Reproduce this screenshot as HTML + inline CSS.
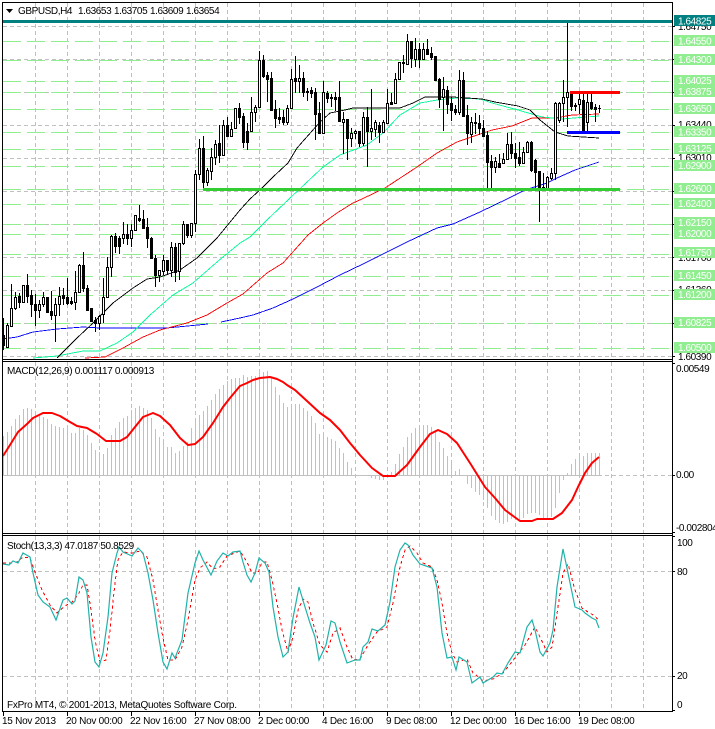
<!DOCTYPE html>
<html><head><meta charset="utf-8"><style>
html,body{margin:0;padding:0;background:#fff;width:715px;height:729px;overflow:hidden}
svg{display:block}
text{font-family:"Liberation Sans",sans-serif;font-size:10px;letter-spacing:-.42px;fill:#000}
.w text{fill:#fff}
.t text{letter-spacing:-.26px}
</style></head><body>
<svg width="715" height="729" viewBox="0 0 715 729" xmlns="http://www.w3.org/2000/svg">
<rect width="715" height="729" fill="#fff"/>
<!-- vertical grid -->
<g stroke="#c0c0c0" stroke-dasharray="4 3" fill="none" shape-rendering="crispEdges">
<path d="M35.5 3V359M67.5 3V359M99.5 3V359M131.5 3V359M163.5 3V359M195.5 3V359M227.5 3V359M259.5 3V359M291.5 3V359M323.5 3V359M355.5 3V359M387.5 3V359M419.5 3V359M451.5 3V359M483.5 3V359M515.5 3V359M547.5 3V359M579.5 3V359M611.5 3V359M643.5 3V359"/>
<path d="M35.5 362V533M67.5 362V533M99.5 362V533M131.5 362V533M163.5 362V533M195.5 362V533M227.5 362V533M259.5 362V533M291.5 362V533M323.5 362V533M355.5 362V533M387.5 362V533M419.5 362V533M451.5 362V533M483.5 362V533M515.5 362V533M547.5 362V533M579.5 362V533M611.5 362V533M643.5 362V533"/>
<path d="M35.5 536V711M67.5 536V711M99.5 536V711M131.5 536V711M163.5 536V711M195.5 536V711M227.5 536V711M259.5 536V711M291.5 536V711M323.5 536V711M355.5 536V711M387.5 536V711M419.5 536V711M451.5 536V711M483.5 536V711M515.5 536V711M547.5 536V711M579.5 536V711M611.5 536V711M643.5 536V711"/>
<path d="M3 26.5H672M3 59.5H672M3 92.5H672M3 125.5H672M3 158.5H672M3 191.5H672M3 224.5H672M3 257.5H672M3 290.5H672M3 323.5H672M3 356.5H672"/>
<path d="M3 475.5H672M3 571.5H672M3 676.5H672"/>
</g>
<!-- green level lines -->
<path fill="none" stroke="#90ee90" stroke-dasharray="18 6" shape-rendering="crispEdges" d="M3 41.5H672M3 60.5H672M3 81.5H672M3 92.5H672M3 109.5H672M3 132.5H672M3 149.5H672M3 166.5H672M3 189.5H672M3 204.5H672M3 224.5H672M3 234.5H672M3 254.5H672M3 276.5H672M3 295.5H672M3 323.5H672M3 348.5H672"/>
<!-- moving averages -->
<g fill="none" shape-rendering="crispEdges" stroke-width=".9">
<polyline stroke="#0000ff" points="3,339 17,337 33,332 57,329 83,327 100,328 133,328 167,328 208,324"/>
<polyline stroke="#0000ff" points="221,322 240,318 253,315 273,308 293,299 317,287 340,275 363,264 383,254 407,242 437,228 453,224 480,212 507,199 525,190 547,183 557,178 575,170 599,162"/>
<polyline stroke="#ff0000" points="85,358 105,357 123,348 143,337 160,330 187,323 207,315 227,303 243,294 267,273 283,263 308,235 323,223 337,213 353,203 362,199 385,188 417,167 437,153 457,142 480,134 492,130 512,126 532,118 555,118 572,115 599,114"/>
<polyline stroke="#00fa9a" points="33,358 57,356 83,351 100,351 117,343 133,332 150,315 173,295 193,283 217,262 240,243 250,237 267,220 289,199 323,167 340,155 367,145 383,133 400,115 420,103 437,100 457,98 480,99 492,103 518,110 542,117 562,119 599,116"/>
<polyline stroke="#000000" points="57,358 77,338 93,323 113,303 133,288 147,279 160,277 180,270 197,258 217,238 240,210 250,199 262,188 273,177 288,163 297,148 320,122 330,113 345,110 353,108 368,108 377,108 400,108 413,103 425,97 453,97 482,99 495,102 518,106 530,110 540,120 555,132 568,136 599,138"/>
</g>
<!-- candles -->
<g shape-rendering="crispEdges">
<path fill="none" stroke="#000" d="M3.5 318V350M7.5 323V348M11.5 284V327M15.5 292V310M19.5 293V308M23.5 285V303M27.5 274V303M31.5 290V317M35.5 294V326M39.5 300V318M43.5 292V307M47.5 297V313M51.5 291V320M55.5 298V342M59.5 287V316M63.5 288V305M67.5 278V305M71.5 297V305M75.5 271V310M79.5 264V293M83.5 252V292M87.5 285V310M91.5 308V321M95.5 317V332M99.5 315V330M103.5 278V323M107.5 257V298M111.5 235V277M115.5 233V253M119.5 236V254M123.5 222V244M127.5 224V245M131.5 224V247M135.5 215V231M139.5 205V222M143.5 210V228M147.5 218V248M151.5 237V259M155.5 255V287M159.5 270V282M163.5 255V275M167.5 260V275M171.5 242V277M175.5 243V282M179.5 243V280M183.5 221V245M187.5 224V238M191.5 223V238M195.5 170V232M199.5 139V180M203.5 136V190M207.5 168V186M211.5 148V180M215.5 140V165M219.5 125V163M223.5 120V155M227.5 117V137M231.5 122V137M235.5 108V129M239.5 103V124M243.5 113V148M247.5 123V150M251.5 97V132M255.5 105V122M259.5 51V108M263.5 55V78M267.5 72V102M271.5 72V110M275.5 100V128M279.5 108V124M283.5 110V125M287.5 105V125M291.5 69V109M295.5 56V93M299.5 65V93M303.5 72V97M307.5 88V101M311.5 87V98M315.5 88V140M319.5 102V133M323.5 81V133M327.5 91V103M331.5 94V107M335.5 92V111M339.5 81V122M343.5 112V154M347.5 119V160M351.5 128V147M355.5 130V139M359.5 131V147M363.5 112V146M367.5 107V167M371.5 89V140M375.5 120V137M379.5 122V143M383.5 120V133M387.5 89V124M391.5 93V105M395.5 73V104M399.5 62V80M403.5 55V73M407.5 34V64M411.5 41V68M415.5 38V67M419.5 43V68M423.5 43V60M427.5 39V55M431.5 47V60M435.5 56V81M439.5 78V108M443.5 77V131M447.5 86V114M451.5 97V121M455.5 105V115M459.5 70V115M463.5 72V116M467.5 105V145M471.5 117V143M475.5 113V134M479.5 115V135M483.5 120V136M487.5 131V188M491.5 155V188M495.5 157V173M499.5 154V168M503.5 153V164M507.5 133V160M511.5 132V159M515.5 143V168M519.5 142V166M523.5 147V163M527.5 141V153M531.5 141V172M535.5 159V190M539.5 171V222M543.5 173V191M547.5 176V190M551.5 168V180M555.5 102V180M559.5 102V123M563.5 80V122M567.5 21V127M571.5 91V111M575.5 103V111M579.5 93V114M583.5 93V132M587.5 93V133M591.5 93V110M595.5 104V122M599.5 105V113M598 108.5H601"/>
<path fill="#fff" stroke="#000" d="M6.5 325.5h2V347.5h-2zM10.5 308.5h2V326.5h-2zM14.5 297.5h2V308.5h-2zM22.5 285.5h2V302.5h-2zM38.5 304.5h2V310.5h-2zM42.5 297.5h2V304.5h-2zM54.5 304.5h2V315.5h-2zM58.5 296.5h2V304.5h-2zM74.5 292.5h2V302.5h-2zM78.5 265.5h2V292.5h-2zM98.5 316.5h2V323.5h-2zM102.5 297.5h2V314.5h-2zM106.5 267.5h2V297.5h-2zM110.5 236.5h2V267.5h-2zM122.5 234.5h2V238.5h-2zM130.5 230.5h2V238.5h-2zM134.5 215.5h2V230.5h-2zM158.5 270.5h2V275.5h-2zM162.5 260.5h2V271.5h-2zM170.5 247.5h2V270.5h-2zM178.5 243.5h2V271.5h-2zM182.5 224.5h2V243.5h-2zM190.5 223.5h2V235.5h-2zM194.5 174.5h2V223.5h-2zM198.5 148.5h2V174.5h-2zM206.5 170.5h2V182.5h-2zM210.5 157.5h2V171.5h-2zM214.5 144.5h2V157.5h-2zM222.5 125.5h2V155.5h-2zM230.5 129.5h2V136.5h-2zM234.5 108.5h2V128.5h-2zM250.5 112.5h2V131.5h-2zM254.5 107.5h2V112.5h-2zM258.5 60.5h2V107.5h-2zM286.5 108.5h2V122.5h-2zM290.5 79.5h2V108.5h-2zM298.5 78.5h2V81.5h-2zM322.5 92.5h2V133.5h-2zM342.5 119.5h2V122.5h-2zM350.5 133.5h2V138.5h-2zM354.5 131.5h2V133.5h-2zM362.5 117.5h2V143.5h-2zM370.5 128.5h2V131.5h-2zM374.5 122.5h2V129.5h-2zM382.5 122.5h2V132.5h-2zM386.5 103.5h2V123.5h-2zM394.5 79.5h2V103.5h-2zM398.5 62.5h2V79.5h-2zM406.5 41.5h2V64.5h-2zM414.5 49.5h2V59.5h-2zM422.5 49.5h2V59.5h-2zM442.5 89.5h2V97.5h-2zM458.5 80.5h2V112.5h-2zM470.5 122.5h2V134.5h-2zM474.5 122.5h2V123.5h-2zM494.5 161.5h2V167.5h-2zM502.5 159.5h2V163.5h-2zM506.5 144.5h2V159.5h-2zM522.5 152.5h2V163.5h-2zM526.5 142.5h2V152.5h-2zM542.5 187.5h2V190.5h-2zM546.5 177.5h2V188.5h-2zM550.5 173.5h2V178.5h-2zM554.5 103.5h2V173.5h-2zM558.5 103.5h2V120.5h-2zM562.5 97.5h2V103.5h-2zM566.5 92.5h2V97.5h-2zM574.5 105.5h2V106.5h-2zM578.5 99.5h2V104.5h-2zM586.5 102.5h2V122.5h-2z"/>
<path fill="#000" stroke="#000" d="M2.5 335.5h2V345.5h-2zM18.5 296.5h2V302.5h-2zM26.5 285.5h2V296.5h-2zM30.5 295.5h2V304.5h-2zM34.5 304.5h2V310.5h-2zM46.5 297.5h2V312.5h-2zM50.5 311.5h2V315.5h-2zM62.5 295.5h2V298.5h-2zM66.5 297.5h2V303.5h-2zM70.5 301.5h2V303.5h-2zM82.5 265.5h2V288.5h-2zM86.5 288.5h2V310.5h-2zM90.5 308.5h2V321.5h-2zM94.5 320.5h2V323.5h-2zM114.5 236.5h2V246.5h-2zM118.5 238.5h2V246.5h-2zM126.5 234.5h2V238.5h-2zM138.5 218.5h2V220.5h-2zM142.5 219.5h2V228.5h-2zM146.5 227.5h2V238.5h-2zM150.5 238.5h2V258.5h-2zM154.5 258.5h2V275.5h-2zM166.5 260.5h2V270.5h-2zM174.5 247.5h2V272.5h-2zM186.5 224.5h2V235.5h-2zM202.5 148.5h2V182.5h-2zM218.5 143.5h2V155.5h-2zM226.5 125.5h2V136.5h-2zM238.5 108.5h2V117.5h-2zM242.5 116.5h2V142.5h-2zM246.5 131.5h2V142.5h-2zM262.5 60.5h2V76.5h-2zM266.5 75.5h2V79.5h-2zM270.5 78.5h2V110.5h-2zM274.5 109.5h2V118.5h-2zM278.5 117.5h2V119.5h-2zM282.5 117.5h2V122.5h-2zM294.5 78.5h2V81.5h-2zM302.5 78.5h2V92.5h-2zM306.5 91.5h2V92.5h-2zM310.5 90.5h2V93.5h-2zM314.5 92.5h2V114.5h-2zM318.5 113.5h2V133.5h-2zM326.5 93.5h2V98.5h-2zM330.5 97.5h2V98.5h-2zM334.5 97.5h2V99.5h-2zM338.5 97.5h2V121.5h-2zM346.5 119.5h2V138.5h-2zM358.5 131.5h2V143.5h-2zM366.5 117.5h2V131.5h-2zM378.5 125.5h2V132.5h-2zM390.5 102.5h2V104.5h-2zM402.5 62.5h2V63.5h-2zM410.5 41.5h2V58.5h-2zM418.5 49.5h2V59.5h-2zM426.5 49.5h2V54.5h-2zM430.5 53.5h2V57.5h-2zM434.5 56.5h2V80.5h-2zM438.5 79.5h2V99.5h-2zM446.5 90.5h2V104.5h-2zM450.5 103.5h2V110.5h-2zM454.5 109.5h2V112.5h-2zM462.5 80.5h2V116.5h-2zM466.5 115.5h2V133.5h-2zM478.5 123.5h2V128.5h-2zM482.5 128.5h2V136.5h-2zM486.5 135.5h2V162.5h-2zM490.5 161.5h2V167.5h-2zM498.5 163.5h2V167.5h-2zM510.5 144.5h2V153.5h-2zM514.5 153.5h2V158.5h-2zM518.5 157.5h2V163.5h-2zM530.5 142.5h2V170.5h-2zM534.5 160.5h2V172.5h-2zM538.5 171.5h2V190.5h-2zM570.5 92.5h2V106.5h-2zM582.5 100.5h2V132.5h-2zM590.5 102.5h2V108.5h-2zM594.5 107.5h2V109.5h-2z"/>
</g>
<!-- trend lines -->
<g shape-rendering="crispEdges">
<rect x="3" y="20" width="669" height="3" fill="#008080"/>
<rect x="203" y="188" width="417" height="3" fill="#32cd32"/>
<rect x="570" y="91" width="50" height="3" fill="#ff0000"/>
<rect x="567" y="131" width="53" height="3" fill="#0000ff"/>
</g>
<!-- MACD histogram -->
<path fill="none" stroke="#c0c0c0" shape-rendering="crispEdges" d="M3.5 475V436M7.5 475V432M11.5 475V426M15.5 475V419M19.5 475V415M23.5 475V409M27.5 475V408M31.5 475V409M35.5 475V413M39.5 475V416M43.5 475V417M47.5 475V419M51.5 475V424M55.5 475V426M59.5 475V427M63.5 475V428M67.5 475V425M71.5 475V433M75.5 475V433M79.5 475V428M83.5 475V430M87.5 475V435M91.5 475V443M95.5 475V450M99.5 475V452M103.5 475V454M107.5 475V448M111.5 475V435M115.5 475V428M119.5 475V422M123.5 475V418M127.5 475V416M131.5 475V410M135.5 475V408M139.5 475V406M143.5 475V408M147.5 475V410M151.5 475V418M155.5 475V429M159.5 475V437M163.5 475V440M167.5 475V447M171.5 475V447M175.5 475V453M179.5 475V451M183.5 475V446M187.5 475V442M191.5 475V428M195.5 475V422M199.5 475V415M203.5 475V411M207.5 475V406M211.5 475V400M215.5 475V394M219.5 475V389M223.5 475V385M227.5 475V381M231.5 475V379M235.5 475V378M239.5 475V378M243.5 475V375M247.5 475V377M251.5 475V376M255.5 475V376M259.5 475V372M263.5 475V372M267.5 475V371M271.5 475V377M275.5 475V387M279.5 475V395M283.5 475V403M287.5 475V407M291.5 475V405M295.5 475V404M299.5 475V404M303.5 475V408M307.5 475V411M311.5 475V416M315.5 475V423M319.5 475V434M323.5 475V435M327.5 475V437M331.5 475V439M335.5 475V441M339.5 475V448M343.5 475V453M347.5 475V462M351.5 475V468M355.5 475V474M371.5 475V478M375.5 475V479M379.5 475V480M383.5 475V480M387.5 475V477M391.5 475V472M395.5 475V464M399.5 475V454M403.5 475V447M407.5 475V437M411.5 475V433M415.5 475V428M419.5 475V426M423.5 475V425M427.5 475V425M431.5 475V427M435.5 475V430M439.5 475V442M443.5 475V448M447.5 475V456M451.5 475V464M455.5 475V471M459.5 475V469M467.5 475V484M471.5 475V488M475.5 475V492M479.5 475V495M483.5 475V500M487.5 475V508M491.5 475V516M495.5 475V520M499.5 475V523M503.5 475V524M507.5 475V522M511.5 475V519M515.5 475V518M519.5 475V521M523.5 475V518M527.5 475V514M531.5 475V513M535.5 475V513M539.5 475V515M543.5 475V518M547.5 475V518M551.5 475V517M555.5 475V508M559.5 475V493M563.5 475V480M567.5 475V473M571.5 475V464M575.5 475V459M579.5 475V453M583.5 475V456M587.5 475V453M591.5 475V453M595.5 475V453M599.5 475V453"/>
<path fill="none" stroke="#c0c0c0" shape-rendering="crispEdges" d="M3 475.5H600"/>
<!-- MACD signal -->
<polyline fill="none" stroke="#ff0000" stroke-width="2" stroke-linejoin="round" points="3,456 10,445 18,432 27,424 33,418 43,413 52,413 60,416 70,422 77,426 87,428 97,434 106,441 120,441 127,437 135,427 143,417 153,413 160,416 170,425 180,438 188,445 195,444 203,437 213,423 223,407 230,398 240,386 247,383 253,380 260,378 270,377 277,379 283,382 287,385 295,390 307,401 320,413 330,420 340,430 350,443 360,455 372,468 383,476 395,476 407,465 420,447 430,434 438,430 447,434 457,443 470,463 475,471 485,487 495,498 505,510 520,521 532,521 537,519 553,519 562,513 572,500 578,487 585,473 592,463 599,457"/>
<!-- Stochastic -->
<polyline fill="none" stroke="#ff0000" stroke-dasharray="3 3" shape-rendering="crispEdges" points="3,563 10,563 17,562 23,557 30,558 35,572 42,590 50,605 57,613 65,606 72,602 78,595 83,585 87,585 91,610 95,640 100,662 106,660 110,630 115,583 118,560 123,552 132,553 140,551 147,557 153,580 158,610 163,638 168,660 175,660 182,647 188,620 195,580 200,568 207,562 213,569 220,567 227,556 240,551 247,562 252,573 258,573 262,562 267,562 272,580 277,603 282,630 288,652 293,637 298,610 303,599 308,602 313,623 320,645 327,652 333,633 340,628 347,647 353,660 360,659 368,645 377,632 387,627 393,603 400,567 405,550 410,546 417,553 423,563 432,567 437,580 442,603 447,633 452,653 457,662 467,659 473,673 480,678 483,681 493,679 503,673 515,658 525,645 535,627 540,637 547,652 552,647 558,607 563,573 568,564 575,590 582,608 588,612 595,616 599,621"/>
<polyline fill="none" stroke="#20b2aa" stroke-width="1.2" points="3,564 9,565 13,561 18,563 23,553 30,557 33,573 38,595 43,602 50,607 56,620 63,600 67,598 72,604 75,601 79,577 83,580 87,593 91,637 95,662 99,667 103,653 108,617 112,573 117,553 119,547 123,552 132,556 138,548 143,553 148,573 153,600 158,633 163,662 167,669 172,653 175,658 182,640 188,593 195,563 199,551 203,560 211,575 217,561 223,553 228,556 233,552 240,551 243,562 247,575 251,582 255,573 259,558 265,563 269,572 273,607 278,637 283,657 288,652 293,618 299,587 305,607 310,623 315,637 319,660 326,645 331,621 335,623 340,642 347,663 355,660 360,660 363,647 368,642 372,629 378,631 385,625 390,602 395,567 400,550 405,543 408,545 413,555 420,564 432,568 437,587 442,633 447,658 452,657 456,670 459,657 467,662 472,683 480,677 483,683 493,677 497,673 502,674 508,663 515,652 520,653 527,627 532,620 535,630 540,652 543,656 550,643 553,630 557,587 563,549 568,573 575,607 582,610 585,613 592,618 596,620 599,628"/>
<!-- frames -->
<g fill="none" stroke="#000" shape-rendering="crispEdges">
<path d="M2.5 2V712M672.5 2V712M2 2.5H673M2 359.5H673M2 361.5H673M2 533.5H673M2 535.5H673M2 711.5H673"/>
<path d="M672 26.5h3M672 59.5h3M672 92.5h3M672 125.5h3M672 158.5h3M672 191.5h3M672 224.5h3M672 257.5h3M672 290.5h3M672 323.5h3M672 356.5h3M672 363.5h3M672 475.5h3M672 532.5h3M672 536.5h3M672 571.5h3M672 676.5h3M672 710.5h3"/>
<path d="M3.5 712v4M67.5 712v4M131.5 712v4M195.5 712v4M259.5 712v4M323.5 712v4M387.5 712v4M451.5 712v4M515.5 712v4M579.5 712v4"/>
</g>
<!-- title & indicator labels -->
<polygon points="6,9 13,9 9.5,13" fill="#000"/>
<text x="18" y="14">GBPUSD,H4</text>
<text x="78" y="14">1.63653</text><text x="114" y="14">1.63705</text><text x="150" y="14">1.63609</text><text x="186" y="14">1.63654</text>
<text x="7" y="374" style="letter-spacing:-.32px">MACD(12,26,9) 0.001117 0.000913</text>
<text x="7" y="549" style="letter-spacing:-.38px">Stoch(13,3,3) 47.0187 50.8529</text>
<text x="7" y="708" style="letter-spacing:-.26px">FxPro MT4, © 2001-2013, MetaQuotes Software Corp.</text>
<!-- black axis labels -->
<text x="678" y="30">1.64750</text>
<text x="678" y="128">1.63440</text>
<text x="678" y="161">1.63010</text>
<text x="678" y="261">1.61700</text>
<text x="678" y="293">1.61360</text>
<text x="678" y="360">1.60390</text>
<text x="676" y="372">0.00549</text>
<text x="676" y="478">0.00</text>
<text x="676" y="531">-0.002804</text>
<text x="677" y="546">100</text>
<text x="677" y="575">80</text>
<text x="677" y="679">20</text>
<text x="677" y="708">0</text>
<!-- price tags -->
<g shape-rendering="crispEdges">
<rect x="674" y="15" width="41" height="11" fill="#008080"/>
<g fill="#90ee90">
<rect x="674" y="35" width="41" height="11"/><rect x="674" y="54" width="41" height="11"/><rect x="674" y="75" width="41" height="11"/><rect x="674" y="86" width="41" height="11"/><rect x="674" y="103" width="41" height="11"/><rect x="674" y="126" width="41" height="11"/><rect x="674" y="143" width="41" height="11"/><rect x="674" y="160" width="41" height="11"/><rect x="674" y="183" width="41" height="11"/><rect x="674" y="198" width="41" height="11"/><rect x="674" y="217" width="41" height="11"/><rect x="674" y="228" width="41" height="11"/><rect x="674" y="247" width="41" height="11"/><rect x="674" y="270" width="41" height="11"/><rect x="674" y="289" width="41" height="11"/><rect x="674" y="317" width="41" height="11"/><rect x="674" y="342" width="41" height="11"/>
</g>
</g>
<g class="w">
<text x="678" y="24.5">1.64825</text>
<text x="678" y="44.5">1.64550</text>
<text x="678" y="63">1.64300</text>
<text x="678" y="84">1.64025</text>
<text x="678" y="95">1.63875</text>
<text x="678" y="112">1.63650</text>
<text x="678" y="135.5">1.63350</text>
<text x="678" y="152">1.63125</text>
<text x="678" y="169">1.62900</text>
<text x="678" y="192">1.62600</text>
<text x="678" y="207">1.62400</text>
<text x="678" y="226">1.62150</text>
<text x="678" y="237">1.62000</text>
<text x="678" y="256">1.61750</text>
<text x="678" y="279">1.61450</text>
<text x="678" y="298">1.61200</text>
<text x="678" y="326">1.60825</text>
<text x="678" y="351">1.60500</text>
</g>
<!-- time axis -->
<g class="t">
<text x="2" y="724">15 Nov 2013</text>
<text x="66" y="724">20 Nov 00:00</text>
<text x="130" y="724">22 Nov 16:00</text>
<text x="194" y="724">27 Nov 08:00</text>
<text x="258" y="724">2 Dec 00:00</text>
<text x="322" y="724">4 Dec 16:00</text>
<text x="386" y="724">9 Dec 08:00</text>
<text x="450" y="724">12 Dec 00:00</text>
<text x="514" y="724">16 Dec 16:00</text>
<text x="578" y="724">19 Dec 08:00</text>
</g>
</svg>
</body></html>
